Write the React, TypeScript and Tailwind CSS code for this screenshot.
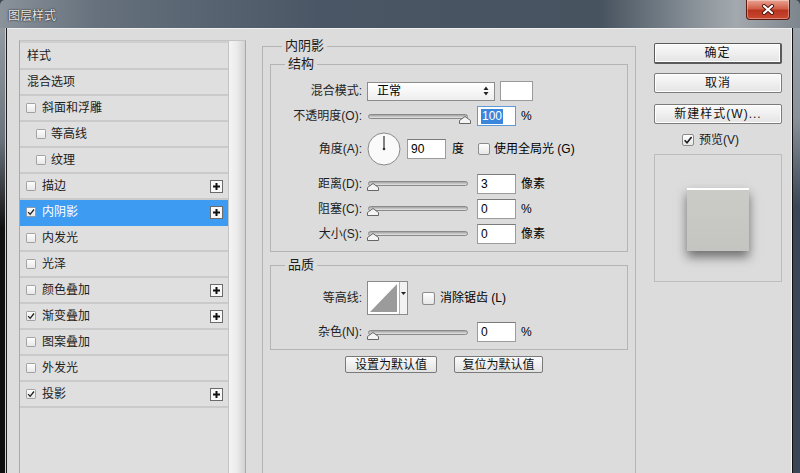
import React from "react";

const FONT = "font-['Liberation_Sans','Noto_Sans_CJK_SC',sans-serif]";

type Layer = {
  name: string;
  box?: boolean;
  checked?: boolean;
  indent?: boolean;
  plus?: boolean;
  active?: boolean;
};

const layers: Layer[] = [
  { name: "样式" },
  { name: "混合选项" },
  { name: "斜面和浮雕", box: true },
  { name: "等高线", box: true, indent: true },
  { name: "纹理", box: true, indent: true },
  { name: "描边", box: true, plus: true },
  { name: "内阴影", box: true, checked: true, plus: true, active: true },
  { name: "内发光", box: true },
  { name: "光泽", box: true },
  { name: "颜色叠加", box: true, plus: true },
  { name: "渐变叠加", box: true, checked: true, plus: true },
  { name: "图案叠加", box: true },
  { name: "外发光", box: true },
  { name: "投影", box: true, checked: true, plus: true },
];

const CheckBox = ({ checked, size = 10 }: { checked?: boolean; size?: number }) => (
  <svg width={size} height={size} viewBox="0 0 12 12" className="shrink-0">
    <defs>
      <linearGradient id="cbg" x1="0" y1="0" x2="0" y2="1">
        <stop offset="0" stopColor="#ffffff" />
        <stop offset="1" stopColor="#e6e6e6" />
      </linearGradient>
    </defs>
    <rect x="0.5" y="0.5" width="11" height="11" rx="1.5" fill="url(#cbg)" stroke="#8c8c8c" />
    {checked && <path d="M2.6 6.2 L5 8.8 L9.6 3" fill="none" stroke="#1e1e1e" strokeWidth="1.6" />}
  </svg>
);

const PlusBox = () => (
  <svg width="13" height="13" viewBox="0 0 13 13" className="shrink-0">
    <rect x="0.5" y="0.5" width="12" height="12" fill="#f8f8f8" stroke="#6b6b6b" />
    <path d="M3 6.5 H10 M6.5 3 V10" stroke="#111" strokeWidth="2" />
  </svg>
);

const Slider = ({ pos }: { pos: number }) => (
  <div className="relative ml-[6px] h-[5px] w-[100px] rounded-full border border-[#8a8a8a] bg-[linear-gradient(to_bottom,#a2a2a2,#e6e6e6)]">
    <svg className="absolute top-[1px]" style={{ left: pos - 6 }} width="12" height="8" viewBox="0 0 12 8">
      <path d="M6 0.5 L11.5 4.5 V7.5 H0.5 V4.5 Z" fill="#f4f4f4" stroke="#666" />
    </svg>
  </div>
);

const Field = ({ value, selected, ml = "ml-[9px]" }: { value: string; selected?: boolean; ml?: string }) => (
  <div
    className={`${ml} flex h-[20px] w-[39px] items-center border pl-[3px] text-[12px] ${
      selected ? "border-[#5b9bd8] bg-white" : "border-[#9c9c9c] border-t-[#7a7a7a] bg-white"
    }`}
  >
    {selected ? <span className="bg-[#3a86dc] px-[1px] leading-[15px] text-white">{value}</span> : value}
  </div>
);

const Label = ({ children }: { children: React.ReactNode }) => (
  <div className="w-[91px] shrink-0 text-right text-[12px] text-[#1e1e1e]">{children}</div>
);

const Btn = ({ children, strong }: { children: React.ReactNode; strong?: boolean }) => (
  <div
    className={`flex items-center justify-center rounded-[2px] border bg-[linear-gradient(to_bottom,#fafafa,#e4e4e4)] text-[12px] tracking-[1px] text-[#111] shadow-[inset_0_0_0_1px_#fff] ${
      strong ? "h-[21px] border-[#5a5a5a] border-b-[2px] border-r-[2px]" : "h-[20px] border-[#7c7c7c]"
    }`}
  >
    {children}
  </div>
);

const SmallBtn = ({ children }: { children: React.ReactNode }) => (
  <div className="flex h-[17px] items-center justify-center rounded-[2px] border border-[#7a7a7a] bg-[linear-gradient(to_bottom,#fbfbfb,#e2e2e2)] text-[12px] text-[#111]">
    {children}
  </div>
);

export default function App() {
  return (
    <div className={`${FONT} flex h-[473px] w-[800px] flex-col overflow-hidden bg-[#3c4856]`}>
      {/* title bar */}
      <div className="flex h-[28px] shrink-0 items-start rounded-t-[5px] bg-[linear-gradient(to_right,#8a929a,#66717d_12%,#4a5665_40%,#47535f_75%,#8f979e_88%,#a3a9ae_92%,#7d858d)]">
        <div className="ml-[8px] mt-[8px] text-[12px] leading-[16px] text-[#ececec] [text-shadow:0_0_2px_#222,0_0_1px_#000]">
          图层样式
        </div>
        <div className="ml-auto mr-[10px] flex h-[20px] w-[44px] items-center justify-center rounded-b-[4px] border border-t-0 border-[#5e1a10] bg-[linear-gradient(to_bottom,#e9a493,#d2604a_45%,#b93520_55%,#c9492f)] shadow-[inset_0_0_0_1px_rgba(255,255,255,0.35)]">
          <svg width="14" height="11" viewBox="0 0 14 11">
            <path d="M3 2 L11 9 M11 2 L3 9" stroke="#4a1208" strokeWidth="4" strokeLinecap="round" />
            <path d="M3 2 L11 9 M11 2 L3 9" stroke="#fff" strokeWidth="2.2" strokeLinecap="round" />
          </svg>
        </div>
      </div>

      <div className="flex min-h-0 flex-1">
        {/* left frame */}
        <div className="w-[7px] shrink-0 bg-[linear-gradient(to_bottom,#939aa1,#6a737c_25%,#111_45%,#0e0e0e)] shadow-[inset_-1px_0_0_#1c1c1c,inset_-2px_0_0_#cfcfcf]" />

        {/* client */}
        <div className="flex w-[784px] shrink-0 overflow-hidden bg-[#dcdcdc] shadow-[inset_0_1px_0_#eeeeee]">
          {/* layer list */}
          <div className="ml-[12px] mt-[12px] flex h-[450px] w-[227px] shrink-0 border border-[#a9a9a9] border-t-[#c4c4c4] bg-[#dedede]">
            <div className="flex w-[208px] flex-col border-t-[2px] border-[#cfcfcf] pt-[1px]">
              {layers.map((l) => (
                <div
                  key={l.name}
                  className={`flex h-[26px] shrink-0 items-center border-b-2 text-[12px] ${
                    l.active ? "border-[#3d9cf2] bg-[#3d9cf2] text-white" : "border-[#cacaca] bg-[#dfdfdf] text-[#1c1c1c]"
                  } ${l.box ? (l.indent ? "pl-[16px]" : "pl-[6px]") : "pl-[7px]"}`}
                >
                  {l.box && <CheckBox checked={l.checked} />}
                  <span className={l.box ? (l.indent ? "ml-[5px]" : "ml-[6px]") : ""}>{l.name}</span>
                  {l.plus && (
                    <div className="ml-auto mr-[5px]">
                      <PlusBox />
                    </div>
                  )}
                </div>
              ))}
            </div>
            <div className="w-[17px] border-l border-[#c4c4c4] bg-[linear-gradient(to_right,#f4f4f4,#ececec_45%,#d3d3d3)]" />
          </div>

          {/* settings */}
          <div className="ml-[16px] w-[374px] shrink-0 pt-[10px]">
            <fieldset className="h-[450px] border border-[#b4b4b4] px-[7px]">
              <legend className="ml-[12px] px-[3px] text-[13px] leading-[16px] text-[#1a1a1a]">内阴影</legend>

              <fieldset className="mt-[2px] border border-[#b4b4b4] pb-[5px]">
                <legend className="ml-[14px] px-[3px] text-[13px] leading-[16px] text-[#1a1a1a]">结构</legend>

                <div className="mt-[8px] flex h-[22px] items-center">
                  <Label>混合模式:</Label>
                  <div className="ml-[5px] flex h-[19px] w-[128px] items-center justify-between border border-[#8c8c8c] bg-[linear-gradient(to_bottom,#ffffff,#eeeeee)] pl-[9px] pr-[5px] text-[12px]">
                    <span>正常</span>
                    <svg width="6" height="10" viewBox="0 0 6 10">
                      <path d="M3 0.5 L5.5 4 H0.5 Z M3 9.5 L5.5 6 H0.5 Z" fill="#222" />
                    </svg>
                  </div>
                  <div className="ml-[5px] h-[20px] w-[33px] border border-[#9a9a9a] bg-white" />
                </div>

                <div className="flex h-[28px] items-center">
                  <Label>不透明度(O):</Label>
                  <Slider pos={96} />
                  <Field value="100" selected />
                  <span className="ml-[5px] text-[12px]">%</span>
                </div>

                <div className="flex h-[38px] items-center">
                  <Label>角度(A):</Label>
                  <svg className="ml-[5px]" width="34" height="34" viewBox="0 0 34 34">
                    <circle cx="17" cy="17" r="16" fill="#fafafa" stroke="#8a8a8a" />
                    <path d="M17 17 V4" stroke="#333" strokeWidth="1.2" />
                    <circle cx="17" cy="17" r="1.3" fill="#333" />
                  </svg>
                  <Field value="90" ml="ml-[6px]" />
                  <span className="ml-[6px] text-[12px]">度</span>
                  <div className="ml-[14px] flex items-center">
                    <CheckBox size={12} />
                  </div>
                  <span className="ml-[4px] text-[12px]">使用全局光 (G)</span>
                </div>

                <div className="mt-[3px] flex h-[25px] items-center">
                  <Label>距离(D):</Label>
                  <Slider pos={4} />
                  <Field value="3" />
                  <span className="ml-[5px] text-[12px]">像素</span>
                </div>
                <div className="flex h-[25px] items-center">
                  <Label>阻塞(C):</Label>
                  <Slider pos={4} />
                  <Field value="0" />
                  <span className="ml-[5px] text-[12px]">%</span>
                </div>
                <div className="flex h-[25px] items-center">
                  <Label>大小(S):</Label>
                  <Slider pos={4} />
                  <Field value="0" />
                  <span className="ml-[5px] text-[12px]">像素</span>
                </div>
              </fieldset>

              <fieldset className="mt-[5px] border border-[#b4b4b4] pb-[5px]">
                <legend className="ml-[14px] px-[3px] text-[13px] leading-[16px] text-[#1a1a1a]">品质</legend>

                <div className="mt-[7px] flex h-[36px] items-center">
                  <Label>等高线:</Label>
                  <div className="ml-[5px] flex h-[34px] w-[41px] border border-[#8a8a8a] bg-white">
                    <svg width="31" height="32" viewBox="0 0 31 32" className="shrink-0">
                      <path d="M2 30 L29 2 V30 Z" fill="#9b9b9b" />
                    </svg>
                    <div className="flex flex-1 items-start justify-center border-l border-[#b0b0b0] bg-[#f2f2f2] pt-[10px]">
                      <svg width="5" height="3" viewBox="0 0 5 3">
                        <path d="M0 0 H5 L2.5 3 Z" fill="#222" />
                      </svg>
                    </div>
                  </div>
                  <div className="ml-[14px] flex items-center">
                    <CheckBox size={13} />
                  </div>
                  <span className="ml-[5px] text-[12px]">消除锯齿 (L)</span>
                </div>

                <div className="mt-[4px] flex h-[24px] items-center">
                  <Label>杂色(N):</Label>
                  <Slider pos={4} />
                  <Field value="0" />
                  <span className="ml-[5px] text-[12px]">%</span>
                </div>
              </fieldset>

              <div className="mt-[6px] flex gap-[17px] pl-[75px]">
                <div className="w-[92px]">
                  <SmallBtn>设置为默认值</SmallBtn>
                </div>
                <div className="w-[89px]">
                  <SmallBtn>复位为默认值</SmallBtn>
                </div>
              </div>
            </fieldset>
          </div>

          {/* right column */}
          <div className="ml-[18px] flex w-[128px] shrink-0 flex-col pt-[15px]">
            <Btn strong>确定</Btn>
            <div className="mt-[9px]">
              <Btn>取消</Btn>
            </div>
            <div className="mt-[11px]">
              <Btn>新建样式(W)...</Btn>
            </div>
            <div className="mt-[7px] flex items-center pl-[28px]">
              <CheckBox checked size={12} />
              <span className="ml-[5px] text-[12px] text-[#1a1a1a]">预览(V)</span>
            </div>
            <div className="mt-[5px] flex h-[128px] justify-center border border-[#bcbcbc] pt-[33px]">
              <div className="h-[63px] w-[62px] border-t-[2px] border-white bg-[linear-gradient(to_bottom,#cbcbc8,#c4c5c1)] shadow-[0_6px_10px_rgba(0,0,0,0.5)]" />
            </div>
          </div>
        </div>

        {/* right frame */}
        <div className="w-[9px] shrink-0 bg-[linear-gradient(to_bottom,#9ba2a9,#8a9299_20%,#3b4756_40%,#3a4655)] shadow-[inset_1px_0_0_#f4f4f4,inset_2px_0_0_#111]" />
      </div>
    </div>
  );
}
